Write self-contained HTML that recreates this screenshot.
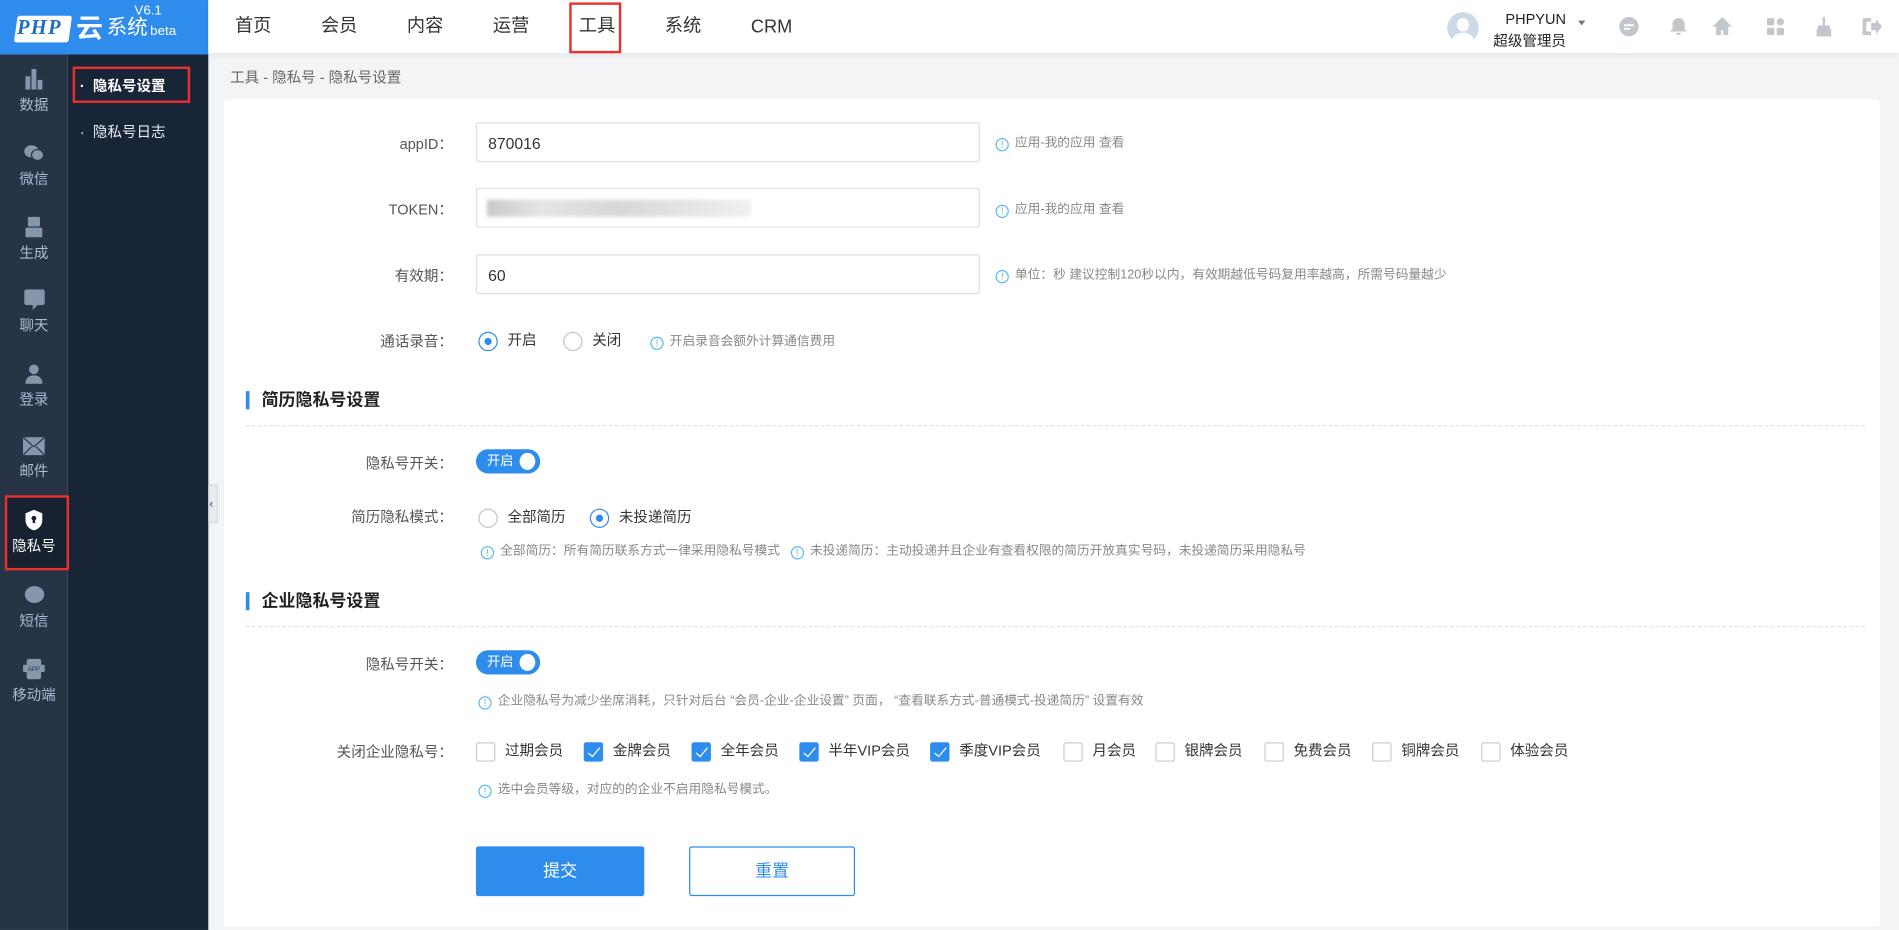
<!DOCTYPE html>
<html><head><meta charset="utf-8"><style>
*{box-sizing:border-box;margin:0;padding:0}
html,body{width:1899px;height:930px;overflow:hidden;background:#f5f6f8}
body{font-family:"Liberation Sans","Noto Sans CJK SC",sans-serif;color:#333}
#s{position:absolute;left:0;top:0;width:1568px;height:768px;transform:scale(1.2111,1.2109);transform-origin:0 0;background:#f3f4f6}
.a{position:absolute}
.logo{left:0;top:0;width:172px;height:45px;background:#2e8ced;color:#fff}
.hdr{left:172px;top:0;width:1396px;height:45px;background:#fff;border-bottom:1px solid #e8e8e8;box-shadow:0 2px 4px rgba(0,0,0,.04)}
.nav{top:12px;font-size:15px;color:#333;line-height:20px;height:20px}
.sb1{left:0;top:45px;width:56px;height:723px;background:#263445}
.sb2{left:56px;top:45px;width:116px;height:723px;background:#182537}
.si{left:0;width:56px;text-align:center;font-size:12px;color:#a9bcd3}
.si svg{display:block;margin:0 auto 4px}
.card{left:185px;top:82px;width:1367px;height:683px;background:#fff}
.lbl{font-size:12px;color:#555;text-align:right;width:200px;left:174px}
.inp{left:393px;width:416px;height:33px;border:1px solid #dcdfe6;border-radius:2px;font-size:13px;padding:9px 9px;color:#333}
.hint{font-size:10.5px;color:#888;white-space:nowrap}
.hint i{display:inline-block;width:11px;height:11px;border:1px solid #5bb8f0;border-radius:50%;font-style:normal;color:#5bb8f0;font-size:8px;line-height:9px;text-align:center;margin-right:5px;vertical-align:-1px}
.rad{display:inline-block;width:16px;height:16px;border:1px solid #c0c4cc;border-radius:50%;vertical-align:middle;margin-right:8px;position:relative}
.rad.on{border-color:#2e8ced}
.rad.on:after{content:"";position:absolute;left:4px;top:4px;width:6px;height:6px;border-radius:50%;background:#2e8ced}
.sec{left:203px;font-size:14px;font-weight:bold;color:#222;border-left:3px solid #2e8ced;padding-left:10px;line-height:15px}
.dash{left:203px;width:1337px;border-top:1px dashed #e2e2e2}
.tg{left:393px;width:53px;height:20px;border-radius:10px;background:#2e8ced;color:#fff;font-size:11px;line-height:20px;padding-left:9px}
.tg:after{content:"";position:absolute;right:4px;top:3px;width:13px;height:14px;border-radius:50%;background:#fff}
.cb{display:inline-block;width:16px;height:16px;border:1px solid #c8ccd2;border-radius:2px;vertical-align:middle;margin-right:8px;position:relative;background:#fff}
.cb.on{background:#2e8ced;border-color:#2e8ced}
.cb.on:after{content:"";position:absolute;left:5px;top:1px;width:4px;height:9px;border:solid #fff;border-width:0 1.5px 1.5px 0;transform:rotate(40deg)}
.ck{top:611px;font-size:12px;color:#333;white-space:nowrap}
.ic{top:12px;width:20px;height:20px}
</style></head><body><div id="s">
<div class="a logo">
 <div class="a" style="left:13px;top:13px;width:45px;height:22px;background:#fff;transform:skewX(-8deg);border-radius:2px"></div>
 <div class="a" style="left:14px;top:13px;font:italic bold 17px 'Liberation Serif',serif;color:#1f6fc0;letter-spacing:1px">PHP</div>
 <div class="a" style="left:63px;top:9px;font:bold 22px 'Noto Sans CJK SC',sans-serif;line-height:26px">云</div>
 <div class="a" style="left:88px;top:13px;font-size:17px;line-height:20px">系统</div>
 <div class="a" style="left:124px;top:20px;font-size:11px">beta</div>
 <div class="a" style="left:111px;top:3px;font-size:11px">V6.1</div>
</div>
<div class="a hdr"></div>
<div class="a nav" style="left:194px">首页</div>
<div class="a nav" style="left:265px">会员</div>
<div class="a nav" style="left:336px">内容</div>
<div class="a nav" style="left:407px">运营</div>
<div class="a nav" style="left:478px">工具</div>
<div class="a" style="left:470px;top:2px;width:43px;height:42px;border:2px solid #e8312f"></div>
<div class="a nav" style="left:549px">系统</div>
<div class="a nav" style="left:620px;top:13px">CRM</div>
<div class="a" style="left:1195px;top:10px;width:26px;height:26px;border-radius:50%;background:#cbd9e8;overflow:hidden"><div class="a" style="left:8px;top:5px;width:10px;height:11px;border-radius:50%;background:#fff"></div><div class="a" style="left:4px;top:17px;width:18px;height:14px;border-radius:50%;background:#fff"></div></div>
<div class="a" style="left:1243px;top:9px;font-size:12px;color:#222">PHPYUN</div>
<div class="a" style="left:1233px;top:25px;font-size:12px;color:#222">超级管理员</div>
<div class="a" style="left:1303px;top:17px;border:3px solid transparent;border-top:4px solid #777"></div>
<svg class="a ic" style="left:1335px" viewBox="0 0 20 20"><circle cx="10" cy="10" r="8" fill="#c2c6cd"/><rect x="6" y="8" width="8" height="1.6" fill="#fff"/><rect x="6" y="11" width="5" height="1.6" fill="#fff"/></svg>
<svg class="a ic" style="left:1376px" viewBox="0 0 20 20"><path d="M10 3c-3 0-5 2-5 5v4l-2 2h14l-2-2V8c0-3-2-5-5-5z M8 15a2 2 0 0 0 4 0z" fill="#c2c6cd"/></svg>
<svg class="a ic" style="left:1412px" viewBox="0 0 20 20"><path d="M10 2l8 8h-3v7h-4v-4H9v4H5v-7H2z" fill="#c2c6cd"/></svg>
<svg class="a ic" style="left:1456px" viewBox="0 0 20 20"><rect x="3" y="3" width="6" height="6" rx="1" fill="#c2c6cd"/><rect x="11" y="3" width="6" height="6" rx="3" fill="#c2c6cd"/><rect x="3" y="11" width="6" height="6" rx="1" fill="#c2c6cd"/><rect x="11" y="11" width="6" height="6" rx="1" fill="#c2c6cd"/></svg>
<svg class="a ic" style="left:1496px" viewBox="0 0 20 20"><rect x="9" y="2" width="2" height="8" fill="#c2c6cd"/><rect x="5" y="9" width="10" height="3" fill="#c2c6cd"/><path d="M4 12h12v6H4z" fill="#c2c6cd"/></svg>
<svg class="a ic" style="left:1535px" viewBox="0 0 20 20"><path d="M3 3h7v3H6v8h4v3H3z M10 7h4V4l5 6-5 6v-3h-4z" fill="#c2c6cd"/></svg>

<div class="a sb1"></div>
<div class="a sb2"></div>
<div class="a si" style="top:57px"><svg width="16" height="17" viewBox="0 0 16 17"><rect x="1" y="6" width="4" height="11" fill="#8597ad"/><rect x="6" y="0" width="4" height="17" fill="#8597ad"/><rect x="11" y="9" width="4" height="8" fill="#8597ad"/></svg>数据</div>
<div class="a si" style="top:118px"><svg width="18" height="17" viewBox="0 0 18 17"><ellipse cx="7" cy="7" rx="6" ry="5" fill="#8597ad"/><ellipse cx="12" cy="10" rx="5" ry="4.5" fill="#8597ad" stroke="#263445"/></svg>微信</div>
<div class="a si" style="top:179px"><svg width="14" height="17" viewBox="0 0 14 17"><rect x="2" y="0" width="10" height="8" rx="1" fill="#8597ad"/><rect x="0" y="9" width="14" height="8" rx="1" fill="#8597ad"/></svg>生成</div>
<div class="a si" style="top:239px"><svg width="17" height="17" viewBox="0 0 17 17"><rect x="0" y="0" width="17" height="13" rx="2" fill="#8597ad"/><path d="M7 13h4l-4 4z" fill="#8597ad"/></svg>聊天</div>
<div class="a si" style="top:300px"><svg width="16" height="17" viewBox="0 0 16 17"><circle cx="8" cy="5" r="4" fill="#8597ad"/><path d="M1 17c0-5 3-7 7-7s7 2 7 7z" fill="#8597ad"/></svg>登录</div>
<div class="a si" style="top:361px"><svg width="18" height="15" viewBox="0 0 18 15"><rect width="18" height="15" fill="#8597ad"/><path d="M0 0l9 8 9-8M0 15l7-7M18 15l-7-7" stroke="#263445" fill="none"/></svg>邮件</div>
<div class="a" style="left:4px;top:409px;width:53px;height:62px;background:#17212f;border:2px solid #e8312f"></div>
<div class="a si" style="top:421px;color:#fff"><svg width="14" height="17" viewBox="0 0 14 17"><path d="M7 0l7 3v5c0 5-3 8-7 9-4-1-7-4-7-9V3z" fill="#fff"/><circle cx="7" cy="7" r="2" fill="#17212f"/><rect x="6" y="7" width="2" height="4" fill="#17212f"/></svg>隐私号</div>
<div class="a si" style="top:483px"><svg width="17" height="17" viewBox="0 0 17 17"><ellipse cx="8.5" cy="8" rx="8" ry="7" fill="#8597ad"/></svg>短信</div>
<div class="a si" style="top:544px"><svg width="18" height="17" viewBox="0 0 18 17"><rect x="3" y="0" width="12" height="17" rx="2" fill="#8597ad"/><rect x="0" y="5" width="18" height="6" rx="1" fill="#8597ad"/><text x="9" y="10" font-size="5" fill="#263445" text-anchor="middle">APP</text></svg>移动端</div>

<div class="a" style="left:60px;top:55px;width:97px;height:30px;border:2px solid #e8312f"></div>
<div class="a" style="left:66px;top:62px;font-size:12px;color:#fff;font-weight:bold">·&nbsp; 隐私号设置</div>
<div class="a" style="left:66px;top:100px;font-size:12px;color:#e6ecf3">·&nbsp; 隐私号日志</div>
<div class="a" style="left:172px;top:400px;width:8px;height:32px;background:#e8eaee;border:1px solid #d8dadd;font-size:9px;line-height:30px;color:#333">‹</div>

<div class="a" style="left:190px;top:55px;font-size:12px;color:#666">工具 - 隐私号 - 隐私号设置</div>
<div class="a card"></div>

<div class="a lbl" style="top:110px">appID：</div>
<div class="a inp" style="top:101px">870016</div>
<div class="a hint" style="left:822px;top:110px"><i>!</i>应用-我的应用 查看</div>
<div class="a lbl" style="top:164px">TOKEN：</div>
<div class="a inp" style="top:155px"><div class="a" style="left:8px;top:9px;width:218px;height:14px;background:linear-gradient(90deg,#c9c9c9,#e4e4e4 20%,#d8d8d8 50%,#e6e6e6 80%,#f0f0f0);filter:blur(1.5px)"></div></div>
<div class="a hint" style="left:822px;top:165px"><i>!</i>应用-我的应用 查看</div>
<div class="a lbl" style="top:219px">有效期：</div>
<div class="a inp" style="top:210px">60</div>
<div class="a hint" style="left:822px;top:219px"><i>!</i>单位：秒 建议控制120秒以内，有效期越低号码复用率越高，所需号码量越少</div>
<div class="a lbl" style="top:273px">通话录音：</div>
<div class="a" style="left:395px;top:272px;font-size:12px;white-space:nowrap"><span class="rad on"></span>开启<span style="display:inline-block;width:22px"></span><span class="rad"></span>关闭</div>
<div class="a hint" style="left:537px;top:274px"><i>!</i>开启录音会额外计算通信费用</div>

<div class="a sec" style="top:323px">简历隐私号设置</div>
<div class="a dash" style="top:351px"></div>
<div class="a lbl" style="top:374px">隐私号开关：</div>
<div class="a tg" style="top:371px">开启</div>
<div class="a lbl" style="top:418px">简历隐私模式：</div>
<div class="a" style="left:395px;top:418px;font-size:12px;white-space:nowrap"><span class="rad"></span>全部简历<span style="display:inline-block;width:20px"></span><span class="rad on"></span>未投递简历</div>
<div class="a hint" style="left:397px;top:447px"><i>!</i>全部简历：所有简历联系方式一律采用隐私号模式&nbsp;&nbsp;&nbsp;<i>!</i>未投递简历：主动投递并且企业有查看权限的简历开放真实号码，未投递简历采用隐私号</div>

<div class="a sec" style="top:489px">企业隐私号设置</div>
<div class="a dash" style="top:517px"></div>
<div class="a lbl" style="top:540px">隐私号开关：</div>
<div class="a tg" style="top:537px">开启</div>
<div class="a hint" style="left:395px;top:571px"><i>!</i>企业隐私号为减少坐席消耗，只针对后台 “会员-企业-企业设置” 页面， “查看联系方式-普通模式-投递简历” 设置有效</div>
<div class="a lbl" style="top:612px">关闭企业隐私号：</div>
<div class="a ck" style="left:393px"><span class="cb"></span>过期会员</div>
<div class="a ck" style="left:482px"><span class="cb on"></span>金牌会员</div>
<div class="a ck" style="left:571px"><span class="cb on"></span>全年会员</div>
<div class="a ck" style="left:660px"><span class="cb on"></span>半年VIP会员</div>
<div class="a ck" style="left:768px"><span class="cb on"></span>季度VIP会员</div>
<div class="a ck" style="left:878px"><span class="cb"></span>月会员</div>
<div class="a ck" style="left:954px"><span class="cb"></span>银牌会员</div>
<div class="a ck" style="left:1044px"><span class="cb"></span>免费会员</div>
<div class="a ck" style="left:1133px"><span class="cb"></span>铜牌会员</div>
<div class="a ck" style="left:1223px"><span class="cb"></span>体验会员</div>
<div class="a hint" style="left:395px;top:644px"><i>!</i>选中会员等级，对应的的企业不启用隐私号模式。</div>

<div class="a" style="left:393px;top:699px;width:139px;height:41px;background:#2e8ced;border-radius:2px;color:#fff;font-size:14px;text-align:center;line-height:41px">提交</div>
<div class="a" style="left:569px;top:699px;width:137px;height:41px;border:1px solid #2e8ced;border-radius:2px;color:#2e8ced;font-size:14px;text-align:center;line-height:39px">重置</div>
</div></body></html>
